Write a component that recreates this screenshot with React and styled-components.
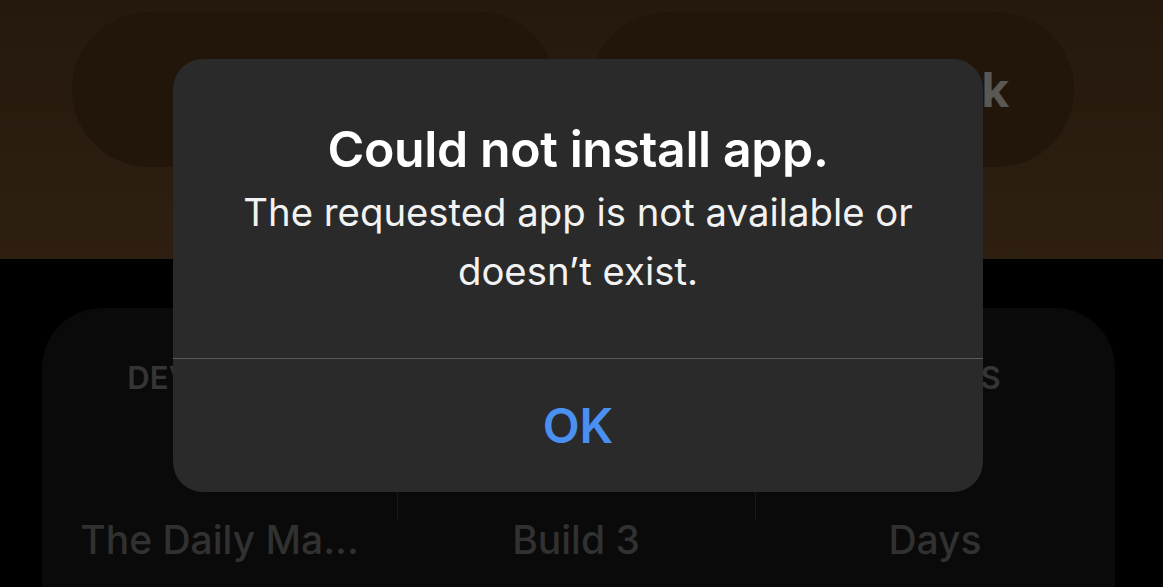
import React from "react";
import styled, { createGlobalStyle } from "styled-components";

const GlobalStyle = createGlobalStyle`
  html, body {
    margin: 0;
    padding: 0;
    background: #000;
  }
  body {
    font-family: Inter, "Noto Sans", "Liberation Sans", sans-serif;
    -webkit-font-smoothing: antialiased;
  }
`;

const Screen = styled.div`
  position: relative;
  width: 1163px;
  height: 587px;
  overflow: hidden;
  background: #000;
`;

const TopBand = styled.div`
  height: 259px;
  box-sizing: border-box;
  padding: 12px 0 0 72px;
  display: flex;
  gap: 34px;
  background: linear-gradient(180deg, #25190d 0%, #2e1f11 100%);
`;

const Pill = styled.div`
  width: 484px;
  height: 155px;
  border-radius: 78px;
  background: #211609;
  display: flex;
  align-items: center;
  justify-content: center;
  color: #5b5753;
  font-size: 48px;
  font-weight: 700;
  letter-spacing: -0.5px;
`;

const Lower = styled.div`
  padding: 49px 0 0 42px;
`;

const InfoCard = styled.div`
  width: 1073px;
  height: 400px;
  border-radius: 60px;
  background: #0a0a0a;
  display: grid;
  grid-template-columns: 355px 358px 360px;
`;

const Column = styled.div`
  display: flex;
  flex-direction: column;
  align-items: center;
`;

// label + (hidden) big value, with the column rule on its left
const ColumnTop = styled.div`
  align-self: stretch;
  height: 212px;
  box-sizing: border-box;
  padding-top: 52px;
  display: flex;
  flex-direction: column;
  align-items: center;
  border-left: ${p => (p.first ? "none" : "1px solid #181818")};
`;

const Label = styled.div`
  color: #353535;
  font-size: 31px;
  font-weight: 600;
  letter-spacing: 0.3px;
  line-height: 36px;
`;

const SubValue = styled.div`
  color: #313131;
  font-size: 39px;
  font-weight: 500;
  line-height: 40px;
  white-space: nowrap;
`;

const Dialog = styled.div`
  position: absolute;
  left: 173px;
  top: 59px;
  width: 810px;
  height: 433px;
  border-radius: 30px;
  background: #2a2a2a;
  display: flex;
  flex-direction: column;
  overflow: hidden;
`;

const DialogBody = styled.div`
  height: 300px;
  box-sizing: border-box;
  padding-top: 61px;
  display: flex;
  flex-direction: column;
  align-items: center;
  border-bottom: 1px solid #5a5a5a;
  text-align: center;
`;

const Title = styled.h1`
  margin: 0;
  color: #fff;
  font-size: 50px;
  font-weight: 600;
  line-height: 58px;
  letter-spacing: -0.4px;
`;

const Message = styled.p`
  margin: 5px 0 0;
  color: #f2f2f2;
  font-size: 38.3px;
  font-weight: 400;
  line-height: 59px;
  max-width: 720px;
`;

const ActionButton = styled.button`
  flex: 1;
  border: none;
  background: transparent;
  color: #4a90f0;
  font-family: inherit;
  font-size: 48px;
  font-weight: 600;
  cursor: pointer;
`;

const columns = [
  { label: "DEVELOPER", sub: "The Daily Ma..." },
  { label: "VERSION", sub: "Build 3" },
  { label: "EXPIRES", sub: "Days" },
];

export default function App() {
  return (
    <>
      <GlobalStyle />
      <Screen>
        <TopBand>
          <Pill>Install</Pill>
          <Pill>Send Feedback</Pill>
        </TopBand>
        <Lower>
          <InfoCard>
            {columns.map((c, i) => (
              <Column key={c.label}>
                <ColumnTop first={i === 0}>
                  <Label>{c.label}</Label>
                </ColumnTop>
                <SubValue>{c.sub}</SubValue>
              </Column>
            ))}
          </InfoCard>
        </Lower>
        <Dialog>
          <DialogBody>
            <Title>Could not install app.</Title>
            <Message>The requested app is not available or doesn’t exist.</Message>
          </DialogBody>
          <ActionButton>OK</ActionButton>
        </Dialog>
      </Screen>
    </>
  );
}
